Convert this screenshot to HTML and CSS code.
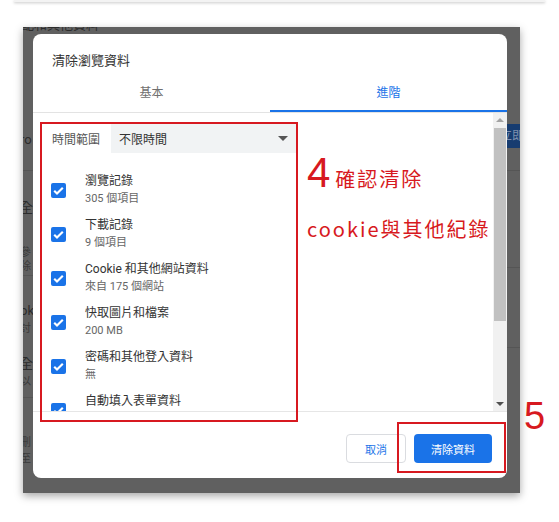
FILE: index.html
```html
<!DOCTYPE html>
<html lang="zh-Hant">
  <head>
    <meta charset="UTF-8" />
    <meta name="viewport" content="width=device-width, initial-scale=1.0" />
    <title>清除瀏覽資料</title>
    <link rel="stylesheet" href="styles.css">
  </head>
  <body>
    <!-- 上方頁面邊 -->
    <div class="topbar"></div>

    <!-- 截圖 -->
    <div class="screen">
      <!-- 對話框後面的設定頁 -->
      <div class="behind">
        <span class="frag" style="left:-2px;top:-10px">配和其他資料</span>
        <span class="frag" style="left:-3px;top:105px">ro</span>
        <span class="frag" style="left:-3px;top:173px">全</span>
        <span class="frag small" style="left:-3px;top:218px">參</span>
        <span class="frag small" style="left:-3px;top:232px">除</span>
        <span class="frag" style="left:-3px;top:276px">ok</span>
        <span class="frag small" style="left:-3px;top:294px">討</span>
        <span class="frag" style="left:-3px;top:329px">全</span>
        <span class="frag small" style="left:-3px;top:347px">以</span>
        <span class="frag small" style="left:-3px;top:408px">刪</span>
        <span class="frag small" style="left:-3px;top:424px">至</span>
        <span class="line" style="left:0;top:143px"></span>
        <span class="line" style="left:0;top:248px"></span>
        <span class="line" style="left:0;top:370px"></span>
        <span class="btn-frag">立即</span>
        <span class="line right" style="top:143px"></span>
        <span class="line right" style="top:240px"></span>
        <span class="line right" style="top:320px"></span>
      </div>

      <div class="dialog">
        <div class="dialog-title">清除瀏覽資料</div>

        <div class="tabs">
          <div class="tab">基本</div>
          <div class="tab active">進階</div>
        </div>

        <div class="dialog-body">
          <div class="options">
            <div class="range-row">
              <span class="range-label">時間範圍</span>
              <div class="select">
                <span>不限時間</span>
                <span class="caret"></span>
              </div>
            </div>

            <div class="item">
              <span class="checkbox"><svg viewBox="0 0 14 14"><path d="M3 7.2l2.6 2.6L11 4.4" /></svg></span>
              <div class="item-text">
                <div class="item-title">瀏覽記錄</div>
                <div class="item-sub">305 個項目</div>
              </div>
            </div>
            <div class="item">
              <span class="checkbox"><svg viewBox="0 0 14 14"><path d="M3 7.2l2.6 2.6L11 4.4" /></svg></span>
              <div class="item-text">
                <div class="item-title">下載記錄</div>
                <div class="item-sub">9 個項目</div>
              </div>
            </div>
            <div class="item">
              <span class="checkbox"><svg viewBox="0 0 14 14"><path d="M3 7.2l2.6 2.6L11 4.4" /></svg></span>
              <div class="item-text">
                <div class="item-title">Cookie 和其他網站資料</div>
                <div class="item-sub">來自 175 個網站</div>
              </div>
            </div>
            <div class="item">
              <span class="checkbox"><svg viewBox="0 0 14 14"><path d="M3 7.2l2.6 2.6L11 4.4" /></svg></span>
              <div class="item-text">
                <div class="item-title">快取圖片和檔案</div>
                <div class="item-sub">200 MB</div>
              </div>
            </div>
            <div class="item">
              <span class="checkbox"><svg viewBox="0 0 14 14"><path d="M3 7.2l2.6 2.6L11 4.4" /></svg></span>
              <div class="item-text">
                <div class="item-title">密碼和其他登入資料</div>
                <div class="item-sub">無</div>
              </div>
            </div>
            <div class="item">
              <span class="checkbox"><svg viewBox="0 0 14 14"><path d="M3 7.2l2.6 2.6L11 4.4" /></svg></span>
              <div class="item-text">
                <div class="item-title">自動填入表單資料</div>
                <div class="item-sub">1 個建議</div>
              </div>
            </div>
          </div>

          <!-- 捲軸 -->
          <div class="scrollbar">
            <span class="arrow up"></span>
            <div class="track"><div class="thumb"></div></div>
            <span class="arrow down"></span>
          </div>
        </div>

        <div class="dialog-footer">
          <button class="btn-cancel">取消</button>
          <button class="btn-clear">清除資料</button>
        </div>
      </div>
    </div>

    <!-- 紅色標註 -->
    <div class="mark-box mark-list"></div>
    <div class="mark-box mark-button"></div>
    <div class="note note-4"><span class="num">4</span>確認清除</div>
    <div class="note note-cookie">cookie與其他紀錄</div>
    <div class="note note-5">5</div>
  </body>
</html>
```

FILE: styles.css
```css
/* 基本設定 */
body {
  margin: 0;
  padding: 0;
  position: relative;
  width: 559px;
  height: 522px;
  overflow: hidden;
  background-color: #fff;
  font-family: Roboto, "Noto Sans CJK TC", sans-serif;
  color: #333;
}

.topbar {
  height: 2px;
  margin: 0 14px 0 14px;
  background-color: #f3f3f3;
  box-shadow: 0 1px 3px rgba(0, 0, 0, 0.25);
}

/* 截圖外框 */
.screen {
  position: relative;
  margin: 25px 0 0 23px;
  width: 497px;
  height: 466px;
  padding: 7px 13px 0 10px;
  box-sizing: border-box;
  background-color: #606060;
  box-shadow: 0 3px 8px rgba(0, 0, 0, 0.35);
  overflow: hidden;
}

.behind {
  position: absolute;
  inset: 0;
}

.frag {
  position: absolute;
  font-size: 13px;
  line-height: 16px;
  color: #2c2c2c;
  white-space: nowrap;
}

.frag.small {
  font-size: 11px;
  color: #3a3a3a;
}

.line {
  position: absolute;
  width: 10px;
  height: 1px;
  background-color: #555;
}

.line.right {
  left: 484px;
  width: 13px;
}

.btn-frag {
  position: absolute;
  left: 474px;
  top: 97px;
  width: 40px;
  height: 24px;
  line-height: 24px;
  padding-left: 3px;
  box-sizing: border-box;
  background-color: #173c70;
  color: #7d8fae;
  font-size: 12px;
}

/* 對話框 */
.dialog {
  position: relative;
  width: 474px;
  height: 444px;
  background-color: #fff;
  border-radius: 8px;
  display: flex;
  flex-direction: column;
  overflow: hidden;
}

.dialog-title {
  padding: 18px 19px 0;
  font-size: 13px;
  line-height: 17px;
  color: #333;
}

.tabs {
  display: flex;
  border-bottom: 1px solid #e3e3e3;
}

.tab {
  flex: 1;
  text-align: center;
  padding: 16px 0 9px;
  font-size: 12px;
  line-height: 16px;
  color: #6f6f6f;
  border-bottom: 2px solid transparent;
}

.tab.active {
  color: #1a73e8;
  border-bottom-color: #1a73e8;
}

.dialog-body {
  display: flex;
  height: 298px;
}

.options {
  flex: 1;
  overflow: hidden;
  padding: 10px 0 0 18px;
}

.range-row {
  display: flex;
  align-items: center;
  margin-bottom: 19px;
}

.range-label {
  width: 59px;
  padding-left: 1px;
  font-size: 12px;
  color: #555;
}

.select {
  width: 185px;
  height: 30px;
  box-sizing: border-box;
  padding: 0 8px;
  background-color: #f1f3f4;
  display: flex;
  align-items: center;
  justify-content: space-between;
  font-size: 12px;
  color: #333;
}

.caret {
  width: 0;
  height: 0;
  border-left: 5px solid transparent;
  border-right: 5px solid transparent;
  border-top: 5px solid #555;
}

.item {
  display: flex;
  align-items: center;
  height: 36px;
  margin-bottom: 8px;
}

.checkbox {
  width: 15px;
  height: 15px;
  border-radius: 2px;
  background-color: #1a73e8;
  margin-right: 19px;
  flex-shrink: 0;
}

.checkbox svg {
  display: block;
  width: 15px;
  height: 15px;
  fill: none;
  stroke: #fff;
  stroke-width: 2;
}

.item-title {
  font-size: 12px;
  line-height: 18px;
  color: #333;
}

.item-sub {
  font-size: 11px;
  line-height: 18px;
  color: #666;
}

/* 捲軸 */
.scrollbar {
  width: 14px;
  background-color: #f1f1f1;
  display: flex;
  flex-direction: column;
  align-items: center;
}

.arrow {
  width: 0;
  height: 0;
  border-left: 4px solid transparent;
  border-right: 4px solid transparent;
  margin: 5px 0;
}

.arrow.up {
  border-bottom: 4px solid #a3a3a3;
}

.arrow.down {
  border-top: 4px solid #505050;
}

.track {
  flex: 1;
  width: 12px;
}

.thumb {
  height: 193px;
  margin-top: 1px;
  background-color: #c1c1c1;
}

.dialog-footer {
  flex: 1;
  border-top: 1px solid #e6e6e6;
  display: flex;
  justify-content: flex-end;
  align-items: flex-start;
  gap: 8px;
  padding: 22px 15px 0 0;
}

.dialog-footer button {
  height: 29px;
  border-radius: 4px;
  font-family: Roboto, "Noto Sans CJK TC", sans-serif;
  font-size: 11px;
  cursor: pointer;
}

.btn-cancel {
  width: 60px;
  background-color: #fff;
  color: #1a73e8;
  border: 1px solid #dadce0;
}

.btn-clear {
  width: 78px;
  background-color: #1a73e8;
  color: #fff;
  border: none;
}

/* 紅色標註 */
.mark-box {
  position: absolute;
  border: 2px solid #d71920;
  box-sizing: border-box;
}

.mark-list {
  left: 40px;
  top: 122px;
  width: 258px;
  height: 300px;
}

.mark-button {
  left: 397px;
  top: 422px;
  width: 109px;
  height: 51px;
}

.note {
  position: absolute;
  color: #d71920;
  font-family: "Noto Sans CJK TC", sans-serif;
  white-space: nowrap;
}

.note-4 {
  left: 307px;
  top: 149px;
  font-size: 20px;
  letter-spacing: 2px;
  line-height: 48px;
}

.note-4 .num {
  font-family: "Liberation Sans", sans-serif;
  font-size: 42px;
  margin-right: 3px;
}

.note-cookie {
  left: 307px;
  top: 215px;
  font-size: 20px;
  line-height: 28px;
  letter-spacing: 2px;
}

.note-5 {
  left: 524px;
  top: 394px;
  font-family: "Liberation Sans", sans-serif;
  font-size: 38px;
  line-height: 44px;
}
```
